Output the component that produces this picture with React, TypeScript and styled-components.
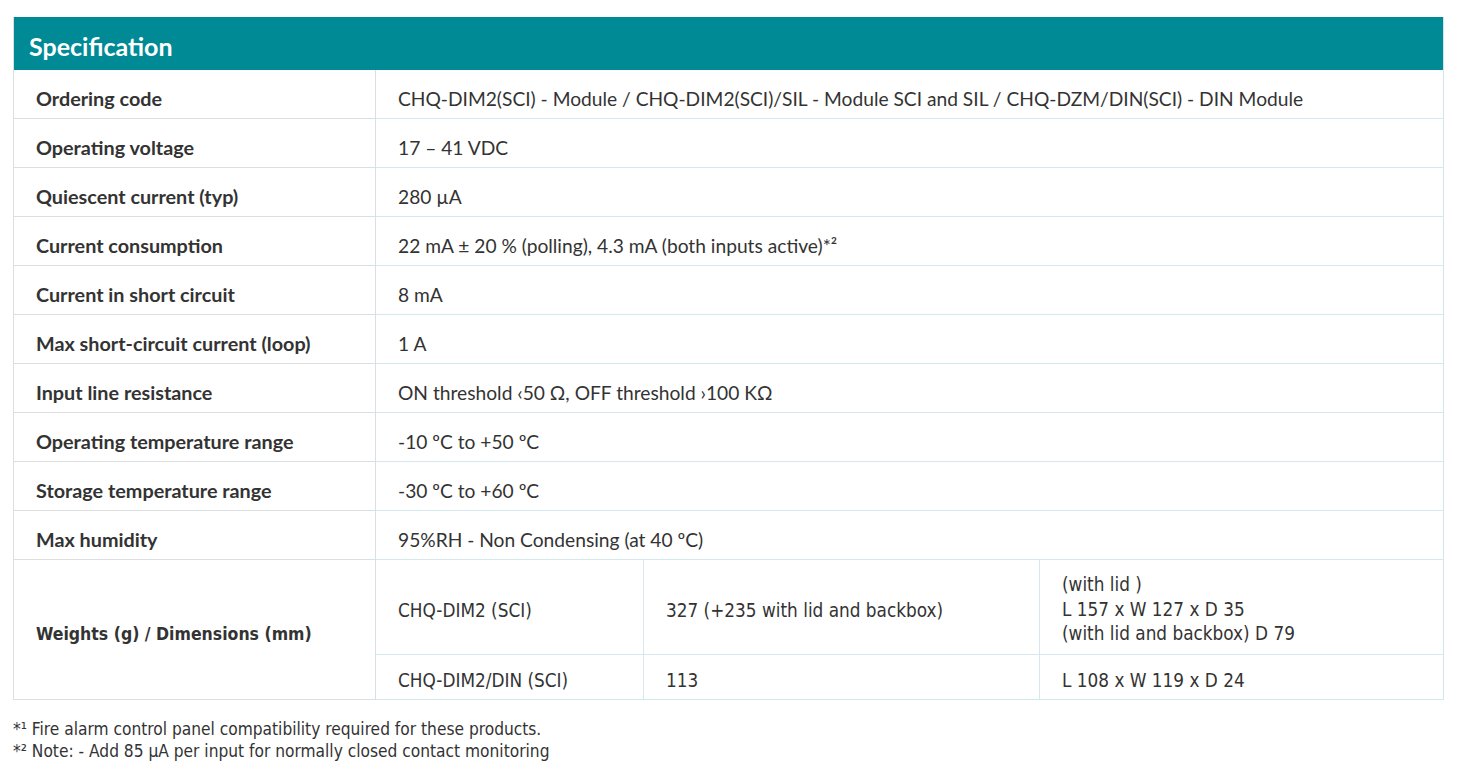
import React from "react";
import styled, { createGlobalStyle } from "styled-components";

const GlobalStyle = createGlobalStyle`
  body {
    margin: 0;
    background: #ffffff;
    font-family: Lato, "Open Sans", sans-serif;
    color: #333333;
  }
`;

const narrowFont = `"Liberation Sans Narrow", "DejaVu Sans Condensed", Roboto, sans-serif`;

const Page = styled.div`
  padding: 17px 17px 0 13px;
  width: 1431px;
`;

const Table = styled.div`
  display: grid;
  grid-template-columns: 362px 268px 396px 1fr;
  border-left: 1px solid #dcdfe1;
  border-right: 1px solid #cfe7ec;
  font-size: 19.2px;
`;

const Header = styled.div`
  grid-column: 1 / -1;
  height: 53px;
  background: #008a96;
  color: #ffffff;
  font-weight: 700;
  font-size: 25px;
  display: flex;
  align-items: center;
  padding: 5px 0 0 15px;
  box-sizing: border-box;
`;

const Label = styled.div<{ $span?: number; $narrow?: boolean }>`
  grid-column: 1;
  grid-row: ${(p) => (p.$span ? `span ${p.$span}` : "auto")};
  height: ${(p) => (p.$span ? "auto" : "49px")};
  box-sizing: border-box;
  display: flex;
  align-items: center;
  padding: 8px 0 0 22px;
  font-weight: 700;
  font-size: ${(p) => (p.$narrow ? "17.5px" : "19.8px")};
  color: #333333;
  font-family: ${(p) => (p.$narrow ? narrowFont : "inherit")};
  border-bottom: 1px solid #dcdfe1;
  border-right: 1px solid #dcdfe1;
`;

const Value = styled.div`
  grid-column: 2 / -1;
  height: 49px;
  box-sizing: border-box;
  display: flex;
  align-items: center;
  padding: 8px 0 0 22px;
  color: #333333;
  border-bottom: 1px solid #d3e9ee;
`;

const SubCell = styled.div<{ $short?: boolean; $last?: boolean }>`
  height: ${(p) => (p.$short ? "45px" : "95px")};
  box-sizing: border-box;
  display: flex;
  align-items: center;
  padding: 6px 0 0 22px;
  color: #333333;
  font-family: ${narrowFont};
  font-size: 18.8px;
  border-bottom: 1px solid #d3e9ee;
  border-right: ${(p) => (p.$last ? "none" : "1px solid #d3e9ee")};
`;

const Lines = styled.div`
  display: flex;
  flex-direction: column;
  line-height: 24.5px;
`;

const Notes = styled.div`
  padding-top: 18px;
  font-family: ${narrowFont};
  font-size: 17.2px;
  line-height: 22px;
  color: #333333;
`;

const Note = styled.div``;

const rows: [string, string][] = [
  [
    "Ordering code",
    "CHQ-DIM2(SCI) - Module / CHQ-DIM2(SCI)/SIL - Module SCI and SIL / CHQ-DZM/DIN(SCI) - DIN Module",
  ],
  ["Operating voltage", "17 – 41 VDC"],
  ["Quiescent current (typ)", "280 µA"],
  ["Current consumption", "22 mA ± 20 % (polling), 4.3 mA (both inputs active)*²"],
  ["Current in short circuit", "8 mA"],
  ["Max short-circuit current (loop)", "1 A"],
  ["Input line resistance", "ON threshold ‹50 Ω, OFF threshold ›100 KΩ"],
  ["Operating temperature range", "-10 ºC to +50 ºC"],
  ["Storage temperature range", "-30 ºC to +60 ºC"],
  ["Max humidity", "95%RH - Non Condensing (at 40 ºC)"],
];

const App = () => {
  return (
    <Page>
      <GlobalStyle />
      <Table>
        <Header>Specification</Header>
        {rows.map(([label, value]) => (
          <React.Fragment key={label}>
            <Label>{label}</Label>
            <Value>{value}</Value>
          </React.Fragment>
        ))}
        <Label $span={2} $narrow>
          Weights (g) / Dimensions (mm)
        </Label>
        <SubCell>CHQ-DIM2 (SCI)</SubCell>
        <SubCell>327 (+235 with lid and backbox)</SubCell>
        <SubCell $last>
          <Lines>
            <span>(with lid )</span>
            <span>L 157 x W 127 x D 35</span>
            <span>(with lid and backbox) D 79</span>
          </Lines>
        </SubCell>
        <SubCell $short>CHQ-DIM2/DIN (SCI)</SubCell>
        <SubCell $short>113</SubCell>
        <SubCell $short $last>
          L 108 x W 119 x D 24
        </SubCell>
      </Table>
      <Notes>
        <Note>*¹ Fire alarm control panel compatibility required for these products.</Note>
        <Note>*² Note: - Add 85 µA per input for normally closed contact monitoring</Note>
      </Notes>
    </Page>
  );
};

export default App;
